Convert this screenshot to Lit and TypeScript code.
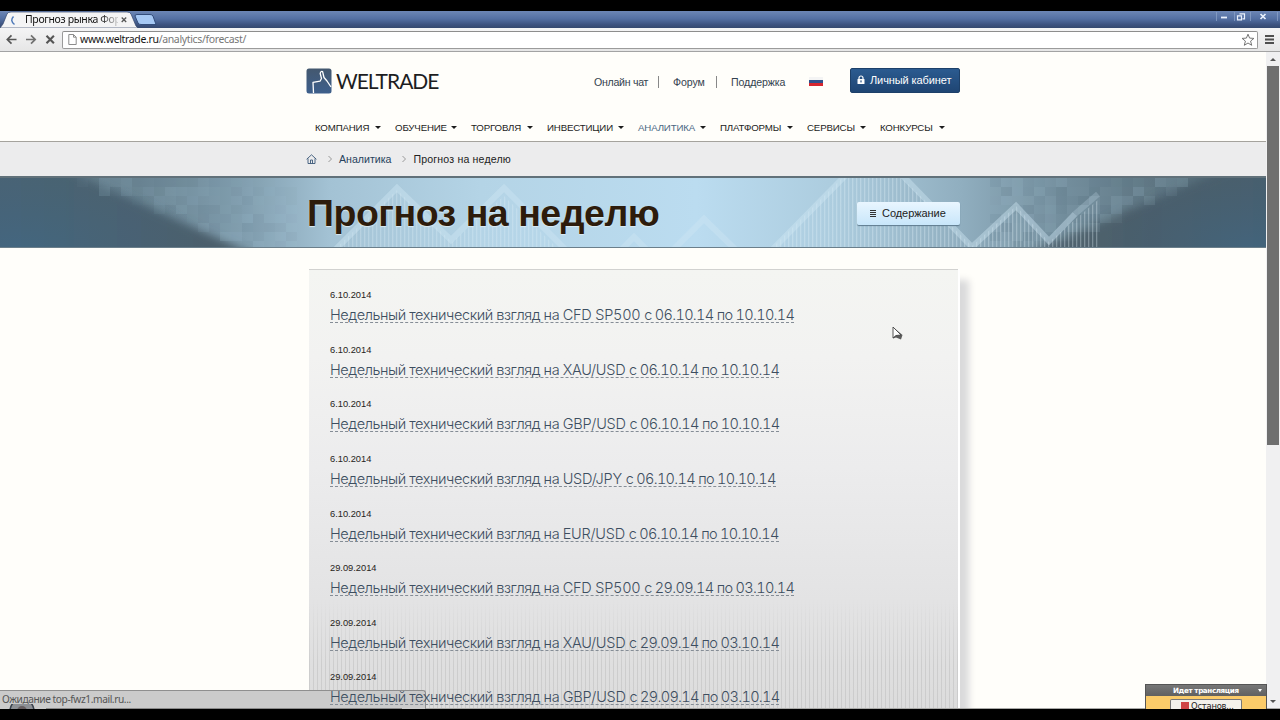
import { LitElement, html, svg, css } from "lit";
import { customElement } from "lit/decorators.js";

const NAV = [
  ["КОМПАНИЯ", 80], ["ОБУЧЕНИЕ", 76], ["ТОРГОВЛЯ", 76], ["ИНВЕСТИЦИИ", 91],
  ["АНАЛИТИКА", 82], ["ПЛАТФОРМЫ", 87], ["СЕРВИСЫ", 73], ["КОНКУРСЫ", 65],
] as [string, number][];

const POSTS = [
  ["6.10.2014", "CFD SP500", "с 06.10.14 по 10.10.14"],
  ["6.10.2014", "XAU/USD", "с 06.10.14 по 10.10.14"],
  ["6.10.2014", "GBP/USD", "с 06.10.14 по 10.10.14"],
  ["6.10.2014", "USD/JPY", "с 06.10.14 по 10.10.14"],
  ["6.10.2014", "EUR/USD", "с 06.10.14 по 10.10.14"],
  ["29.09.2014", "CFD SP500", "с 29.09.14 по 03.10.14"],
  ["29.09.2014", "XAU/USD", "с 29.09.14 по 03.10.14"],
  ["29.09.2014", "GBP/USD", "с 29.09.14 по 03.10.14"],
];

/* Repeatable noise in 0..1 for the banner mosaic. */
const noise = (a: number, b: number) => {
  const v = Math.sin(a * 127.1 + b * 311.7) * 43758.5453;
  return v - Math.floor(v);
};

@customElement("browser-chrome")
class BrowserChrome extends LitElement {
  static styles = css`
    :host { display: block; flex: none; font-family: "Noto Sans", "Open Sans", sans-serif; }
    .title { height: 17px; display: flex; justify-content: space-between; background: linear-gradient(#6c86b5, #5470a3 45%, #3d5380 80%, #35496f); }
    .tabs { display: flex; }
    .tabshape { width: 160px; height: 17px; display: grid; }
    .tabshape > * { grid-area: 1 / 1; }
    .tabtext { padding-left: 25px; width: 93px; font-size: 10.5px; line-height: 17px; letter-spacing: -0.35px; color: #111; white-space: nowrap; -webkit-mask: linear-gradient(90deg, #000 100px, transparent 122px); }
    .bar { height: 23px; padding: 0 5px 0 5px; border-bottom: 1px solid #a3a3a3; background: linear-gradient(#f4f4f5, #e6e6e6); display: flex; align-items: center; }
    .nav { width: 57px; height: 22px; flex: none; }
    .url { flex: 1; height: 16px; border: 1px solid #9b9b9b; border-top-color: #8d8d8d; border-radius: 2px; background: #fff; display: flex; align-items: center; }
    .page { width: 9px; height: 11px; margin: 0 3px 0 5px; }
    .addr { flex: 1; font-size: 10.5px; line-height: 15px; padding-bottom: 1px; letter-spacing: -0.35px; color: #777; white-space: nowrap; }
    .host { color: #151515; }
    .star { width: 14px; height: 14px; margin-right: 2px; }
    .menu { width: 9px; height: 12px; margin-left: 7px; margin-right: 1px; flex: none; }
    svg { display: block; }
  `;
  render() {
    return html`
      <div class="title">
        <div class="tabshape">
          <svg width="160" height="17" viewBox="0 0 160 17">
            <path d="M0 17 L3 13 L7 3 Q8 1 11 1 L127 1 Q130 1 131 3 L136 15 L138 17Z" fill="#f4f4f5" stroke="#33466b" stroke-width=".7"/>
            <path d="M135 5 Q135 3.500 137 3.500 L150 3.500 Q152 3.500 153 5 L156 13.500 L141 13.500 Q139 13.500 138 12Z" fill="#a6c8f4" stroke="#334d7b"/>
            <path d="M13.500 5.500 Q9.500 9.500 14.500 13.500" fill="none" stroke="#4c78b8" stroke-width="1.500"/>
            <path d="M121.700 6.500 l4.500 4.500 M126.200 6.500 l-4.500 4.500" stroke="#555" stroke-width="1.300"/>
          </svg>
          <div class="tabtext">Прогноз рынка Фор</div>
        </div>
        <svg width="66" height="17" viewBox="0 0 66 17">
          <g stroke="#8fa5cb" stroke-width="1" fill="none"><path d="M2.500 1v9M20.500 1v9M36.500 1v9M63.500 1v9" opacity=".7"/></g>
          <path d="M7 6.500h6" stroke="#e9f0fc" stroke-width="1.800"/>
          <path d="M25.500 2.800h5v5h-2M23.500 4.800h4v4h-4z" stroke="#e9f0fc" stroke-width="1.200" fill="none"/>
          <path d="M46.500 3l5 5M51.500 3l-5 5" stroke="#e9f0fc" stroke-width="1.700"/>
        </svg>
      </div>
      <div class="bar">
        <svg class="nav" viewBox="0 0 57 22" fill="none" stroke="#555" stroke-width="1.700">
          <path d="M11.500 10.500H2.500M6.500 6.300L2.300 10.500l4.200 4.200"/>
          <path d="M21 10.500h9M26 6.300L30.200 10.500 26 14.700" stroke="#707070"/>
          <path d="M41.500 6.800l7.400 7.400M48.900 6.800l-7.400 7.400" stroke-width="2.100"/>
        </svg>
        <div class="url">
          <svg class="page" viewBox="0 0 9 11"><path d="M.8.5h4.700l2.700 2.700v7.300H.8zM5.500.5v2.700h2.700" fill="#fff" stroke="#8c8c8c"/></svg>
          <div class="addr"><span class="host">www.weltrade.ru</span>/analytics/forecast/</div>
          <svg class="star" viewBox="0 0 14 14"><path d="M7 1.200l1.600 3.900 4.300.3-3.300 2.700 1.100 4.200L7 10l-3.700 2.300 1.100-4.200L1.100 5.400l4.300-.3z" fill="#fff" stroke="#666" stroke-width=".9"/></svg>
        </div>
        <svg class="menu" viewBox="0 0 9 12"><path d="M0 2h9M0 5.500h9M0 9h9" stroke="#4e4e4e" stroke-width="1.800"/></svg>
      </div>`;
  }
}

@customElement("site-header")
class SiteHeader extends LitElement {
  static styles = css`
    :host { display: block; font-family: "Liberation Sans", Arial, sans-serif; color: #26333f; }
    .head { height: 89px; border-bottom: 1px solid #a5a39d; background: #fffefa; }
    .inner { width: 654px; padding-left: 306px; }
    .top { height: 57px; display: flex; align-items: center; box-sizing: border-box; }
    .logo { width: 133px; height: 26px; display: flex; align-items: center; gap: 4px; }
    .brand { font-family: Lato, sans-serif; font-size: 21px; line-height: 26px; letter-spacing: -1.02px; color: #1d1d1f; padding-top: 1px; }
    .links { margin-left: 155px; height: 12px; display: flex; align-items: center; font-size: 10.6px; letter-spacing: -0.28px; color: #34424f; white-space: nowrap; padding-top: 3px; }
    .link { width: 64px; border-right: 1px solid #888; line-height: 12px; }
    .link.mid { width: 43px; padding-left: 14px; letter-spacing: -0.1px; }
    .link.last { width: 78px; padding-left: 14px; border: 0; letter-spacing: -0.1px; }
    .flag { width: 14px; height: 10px; }
    .cab { margin-left: 27px; box-sizing: border-box; width: 110px; height: 25px; border-radius: 2px; border: 1px solid #1d4069; background: linear-gradient(#2b5b90, #1f4573); color: #fff; font-size: 11px; letter-spacing: -0.1px; display: flex; align-items: center; gap: 5px; padding: 0 0 1px 6px; white-space: nowrap; }
    .menu { padding-left: 9px; display: flex; height: 32px; align-items: center; font-size: 9.7px; color: #1c1c1c; padding-top: 5px; box-sizing: border-box; }
    .item { display: flex; justify-content: space-between; align-items: center; flex: none; box-sizing: border-box; padding-right: 14px; letter-spacing: -0.16px; }
    .item:last-child { padding-right: 0; }
    .item.on { color: #4b6783; }
    .caret { border: 3px solid transparent; border-top-color: #1c1c1c; border-bottom: 0; }
    .crumbs { height: 34px; background: #ececed; }
    .trail { padding-left: 306px; height: 34px; display: flex; align-items: center; font-size: 10.6px; color: #222; white-space: nowrap; }
    .a { color: #26425c; }
    .now { letter-spacing: 0.16px; }
    .sep { margin: 0 7px 0 11px; }
    svg { display: block; flex: none; }
  `;
  render() {
    return html`
      <div class="head"><div class="inner">
        <div class="top">
          <div class="logo">
            <svg width="26" height="26" viewBox="0 0 26 26">
              <defs><linearGradient id="g" x2="0" y2="1"><stop stop-color="#44586f"/><stop offset="1" stop-color="#3d5f8c"/></linearGradient></defs>
              <rect x=".5" y=".5" width="25" height="25" rx="2.500" fill="url(#g)"/>
              <path d="M7.500 25L7 14.300L14 13.200L15.500 10.500L14.200 5.500Q14.600 2.800 16.600 3.600L18 9.500L21 13L25 19" fill="none" stroke="#fff" stroke-width="1.300" stroke-linejoin="round"/>
            </svg>
            <div class="brand">WELTRADE</div>
          </div>
          <div class="links">
            <div class="link">Онлайн чат</div><div class="link mid">Форум</div><div class="link last">Поддержка</div>
            <svg class="flag" viewBox="0 0 14 10"><path fill="#f4f4f4" d="M0 0h14v4H0z"/><path fill="#30518c" d="M0 3h14v3H0z"/><path fill="#d6262f" d="M0 6h14V9H0z"/></svg>
          </div>
          <div class="cab">
            <svg width="8" height="10" viewBox="0 0 8 10"><path d="M2 4.500V3a2 2 0 0 1 4 0v1.500" fill="none" stroke="#fff" stroke-width="1.200"/><rect x=".5" y="4" width="7" height="5" rx=".6" fill="#fff"/><rect x="3.400" y="5.400" width="1.200" height="2" fill="#234d80"/></svg>
            <span>Личный кабинет</span>
          </div>
        </div>
        <div class="menu">
          ${NAV.map(([t, w]) => html`<div class="item ${t === "АНАЛИТИКА" ? "on" : ""}" style="width:${w}px"><span>${t}</span><i class="caret"></i></div>`)}
        </div>
      </div></div>
      <div class="crumbs"><div class="trail">
        <svg width="11" height="10" viewBox="0 0 11 10"><path d="M.6 5.300L5.500.8l4.900 4.500M2 4.500v5h7v-5M4.500 9.500V6h2v3.500" fill="none" stroke="#3b5878" stroke-width=".9"/></svg>
        <svg class="sep" width="4" height="8" viewBox="0 0 4 8"><path d="M.5 1L3.500 4 .5 7" fill="none" stroke="#999"/></svg>
        <span class="a">Аналитика</span>
        <svg class="sep" width="4" height="8" viewBox="0 0 4 8"><path d="M.5 1L3.500 4 .5 7" fill="none" stroke="#999"/></svg>
        <span class="now">Прогноз на неделю</span>
      </div></div>`;
  }
}

@customElement("page-banner")
class PageBanner extends LitElement {
  static styles = css`
    :host { display: grid; height: 72px; font-family: "Liberation Sans", Arial, sans-serif; overflow: hidden; }
    .art, .row { grid-area: 1 / 1; }
    .art { display: block; }
    .row { z-index: 1; display: flex; justify-content: space-between; align-items: center; width: 653px; padding-left: 307px; }
    h1 { margin: 0; padding-top: 2px; font-size: 37.5px; line-height: 44px; color: #2d1c0c; letter-spacing: -0.48px; white-space: nowrap; text-shadow: 0 1px 1px #dcebf2; }
    .toc { box-sizing: border-box; width: 103px; height: 23px; margin-top: 3px; border-radius: 2px; background: linear-gradient(#e9f6ff, #c8e6fa); box-shadow: 0 1px 1px #5f7b8e; display: flex; align-items: center; gap: 6px; padding: 0 0 2px 13px; font-size: 11px; letter-spacing: -0.05px; color: #222; }
    .lines { width: 6px; height: 8px; margin-top: 2px; }
  `;

  mosaic() {
    const out = [];
    for (let r = 0; r < 8; r++) {
      const left = 84 + r * 24;
      for (let c = 0; c < 20; c++) {
        const n = noise(c, r);
        const x = Math.floor(left / 11) * 11 + c * 11;
        if (x > 290) continue;
        out.push(svg`<rect x=${x} y=${2 + r * 9} width="11" height="9" fill=${n > 0.4 ? "#9bbccd" : "#60798a"} opacity=${(Math.abs(n - 0.4) * 0.42 * (1 - c / 22)).toFixed(2)} />`);
      }
      for (let c = 0; c < 18; c++) {
        const n = noise(c + 40, r + 9);
        const x = Math.floor((1185 - r * 18) / 11) * 11 - c * 11;
        if (x < 985) continue;
        out.push(svg`<rect x=${x} y=${2 + r * 9} width="11" height="9" fill=${n > 0.4 ? "#93b0bf" : "#566e7d"} opacity=${(Math.abs(n - 0.4) * 0.42).toFixed(2)} />`);
      }
    }
    return out;
  }

  render() {
    return html`
      <svg class="art" width="1266" height="72" viewBox="0 0 1266 72">
        <defs>
          <linearGradient id="sky" x1="0" x2="1">
            <stop offset="0" stop-color="#566f7d"/><stop offset=".11" stop-color="#67818f"/><stop offset=".19" stop-color="#7f9cad"/>
            <stop offset=".26" stop-color="#a3c2d4"/><stop offset=".38" stop-color="#b4d4e6"/><stop offset=".55" stop-color="#bbdcf0"/>
            <stop offset=".66" stop-color="#acccde"/><stop offset=".76" stop-color="#90aebf"/><stop offset=".84" stop-color="#718c9b"/><stop offset=".91" stop-color="#5f7784"/><stop offset="1" stop-color="#4a616e"/>
          </linearGradient>
          <linearGradient id="dl"><stop offset="0" stop-color="#496577"/><stop offset=".35" stop-color="#4b6270"/><stop offset=".75" stop-color="#4c5d69"/><stop offset="1" stop-color="#5f7583"/></linearGradient>
          <linearGradient id="dr"><stop offset="0" stop-color="#526671"/><stop offset=".4" stop-color="#4a5c68"/><stop offset="1" stop-color="#466072"/></linearGradient>
          <radialGradient id="low"><stop stop-color="#3d6a8c" stop-opacity=".45"/><stop offset="1" stop-color="#3d6482" stop-opacity="0"/></radialGradient>
          <pattern id="bars" width="4" height="72" patternUnits="userSpaceOnUse"><rect width="1.300" height="72" fill="#e4f2f9" opacity=".75"/></pattern>
          <filter id="soft" x="-10%" y="-40%" width="120%" height="180%"><feGaussianBlur stdDeviation="4"/></filter>
        </defs>
        <rect width="1266" height="72" fill="url(#sky)"/>
        <path d="M-60 -40H0L84 2L275 88L400 140H-60Z" fill="url(#dl)" filter="url(#soft)"/>
        <path d="M1330 -40H1310L1205 2L1095 48L1000 90V140H1330Z" fill="url(#dr)" opacity=".93" filter="url(#soft)"/>
        <ellipse cx="20" cy="72" rx="190" ry="75" fill="url(#low)"/><ellipse cx="1250" cy="72" rx="150" ry="70" fill="url(#low)"/>
        ${this.mosaic()}
        <path d="M336 72L397 14L452 66L504 20L557 72Z" fill="url(#bars)" opacity=".36"/>
        <path d="M772 72L842 2H902L972 70L1016 30L1049 66L1098 24V72Z" fill="url(#bars)" opacity=".42"/>
        <g fill="none" stroke="#cfe6f4" stroke-width="6" opacity=".42">
          <path d="M333 76L397 12L451 64L504 12L566 74"/>
          <path d="M621 74L634 61L647 74M671 76L704 43L738 76"/>
          <path d="M770 76L845 0M901 -2L972 71L1016 30L1049 65L1075 38"/>
          <path d="M1075 38L1098 18" opacity=".55"/>
        </g>
        <rect width="1266" height="2" fill="#61717a"/>
        <rect y="71" width="1266" height="1" fill="#6b7f8b"/>
      </svg>
      <div class="row">
        <h1>Прогноз на неделю</h1>
        <div class="toc"><svg class="lines" viewBox="0 0 6 8"><path d="M0 .5h6M0 2.500h6M0 4.500h6M0 6.500h6" stroke="#333" stroke-width="1"/></svg>Содержание</div>
      </div>`;
  }
}

@customElement("forecast-list")
class ForecastList extends LitElement {
  static styles = css`
    :host { display: block; padding: 21px 0 0 309px; font-family: "Liberation Sans", Arial, sans-serif; }
    .card { width: 649px; height: 439px; box-sizing: border-box; border-top: 1px solid #d2d2d0; box-shadow: 2px 0 0 #fff, 12px 10px 7px -1px #dadadb; padding: 19px 0 0 21px;
      background: linear-gradient(#f4f5f2, #f2f2f1 20%, #ececed 45%, #e4e4e5 72%, #dcdcdc); display: grid; align-content: start; }
    .rows { grid-area: 1 / 1; z-index: 1; }
    .grain { grid-area: 1 / 1; margin: 310px 0 0 -21px; height: 109px; background: repeating-linear-gradient(90deg, #b4b4b4 0 1px, transparent 1px 4px); opacity: .4; -webkit-mask: linear-gradient(transparent, #000 60%); }
    .post { height: 54.65px; }
    .date { font-size: 9.3px; line-height: 12px; color: #262320; }
    .link { display: inline-block; font-family: Inter, sans-serif; font-weight: 300; font-size: 14.500px; line-height: 19px; height: 17px; margin-top: 4px; color: #3d4e60; border-bottom: 1px dashed #858d96; white-space: nowrap; font-feature-settings: "tnum", "calt" 0; letter-spacing: -0.22px; }
    .lead { letter-spacing: -0.42px; }
    .span { letter-spacing: -0.68px; }
  `;
  render() {
    return html`<div class="card"><div class="grain"></div><div class="rows">
      ${POSTS.map(([d, t, p]) => html`<div class="post"><div class="date">${d}</div><span class="link"><span class="lead">Недельный технический взгляд на </span>${t} <span class="span">${p}</span></span></div>`)}
    </div></div>`;
  }
}

@customElement("app-root")
class AppRoot extends LitElement {
  static styles = css`
    :host { display: block; }
    .screen { width: 1280px; height: 720px; box-sizing: border-box; border: solid #000; border-width: 11px 0; overflow: hidden; display: flex; flex-direction: column; position: relative; background: #000; }
    .view { flex: 1; min-height: 0; display: flex; background: #fffefa; overflow: hidden; border-bottom: 1px solid #a9a9a7; }
    .site { width: 1266px; overflow: hidden; }
    .scroll { width: 14px; box-sizing: border-box; background: #f0f0f1; display: flex; flex-direction: column; justify-content: space-between; align-items: center; padding: 6px 0 5px; }
    .up { border: 3px solid transparent; border-top: 0; border-bottom-color: #555; }
    .down { border: 3px solid transparent; border-bottom: 0; border-top-color: #555; }
    .thumb { width: 12px; height: 379px; margin: 5px 1px auto 0; background: #6f6f6f; flex: none; }
    .status { position: absolute; left: 0; bottom: 0; width: 426px; height: 19px; box-sizing: border-box; border: solid #8f8f8f; border-width: 1px 1px 0 0; border-radius: 0 3px 0 0; background: #cbcbcb; font: 10.2px/17px "Noto Sans", sans-serif; letter-spacing: -0.42px; color: #555; padding-left: 2px; white-space: nowrap; }
    .clip { position: absolute; left: 0; bottom: 0; width: 425px; height: 5px; }
    .cast { position: absolute; left: 1145px; bottom: 0; width: 122px; height: 25px; box-sizing: border-box; border: 1px solid #555; border-bottom: 0; background: #fbcb69; font-family: "DejaVu Sans", sans-serif; }
    .casthead { height: 11px; background: linear-gradient(#777, #606060); color: #fff; font-size: 7.2px; line-height: 11px; font-weight: 700; display: flex; align-items: center; justify-content: space-between; padding: 0 4px 0 27px; letter-spacing: -0.4px; }
    .casthead .down { border-top-color: #fff; border-width: 3px 2px 0; }
    .stop { margin: 3px 0 0 24px; width: 72px; height: 10px; border: 1px solid #777; border-bottom: 0; border-radius: 2px 2px 0 0; background: #f3f1eb; display: flex; align-items: flex-start; gap: 2px; padding-left: 10px; box-sizing: border-box; font-size: 8.4px; line-height: 12px; letter-spacing: -0.2px; color: #222; }
    .red { width: 8px; height: 8px; margin-top: 2px; background: #cf4444; flex: none; }
    .cursor { position: absolute; left: 892px; top: 315px; }
  `;
  render() {
    return html`<div class="screen">
      <browser-chrome></browser-chrome>
      <div class="view">
        <div class="site"><site-header></site-header><page-banner></page-banner><forecast-list></forecast-list></div>
        <div class="scroll"><i class="up"></i><div class="thumb"></div><i class="down"></i></div>
      </div>
      <svg class="cursor" width="12" height="16" viewBox="0 0 12 16"><path d="M1 1V12.500L4 11.500L9 13.500L10.500 9Z" fill="#5c5c5c"/><path d="M1 1V12L4 9.500L9 9Z" fill="#fff" stroke="#444" stroke-width=".9"/></svg>
      <div class="status">Ожидание top-fwz1.mail.ru...
        <svg class="clip" viewBox="0 0 425 5"><circle cx="22" cy="7" r="12" fill="#8d9095" stroke="#39424d" stroke-width="1.500"/><circle cx="22" cy="7" r="5" fill="#665e60"/><path d="M46 4.500H402" stroke="#8a8a8a"/></svg>
      </div>
      <div class="cast"><div class="casthead"><span>Идет трансляция</span><i class="down"></i></div><div class="stop"><i class="red"></i>Останов...</div></div>
    </div>`;
  }
}
